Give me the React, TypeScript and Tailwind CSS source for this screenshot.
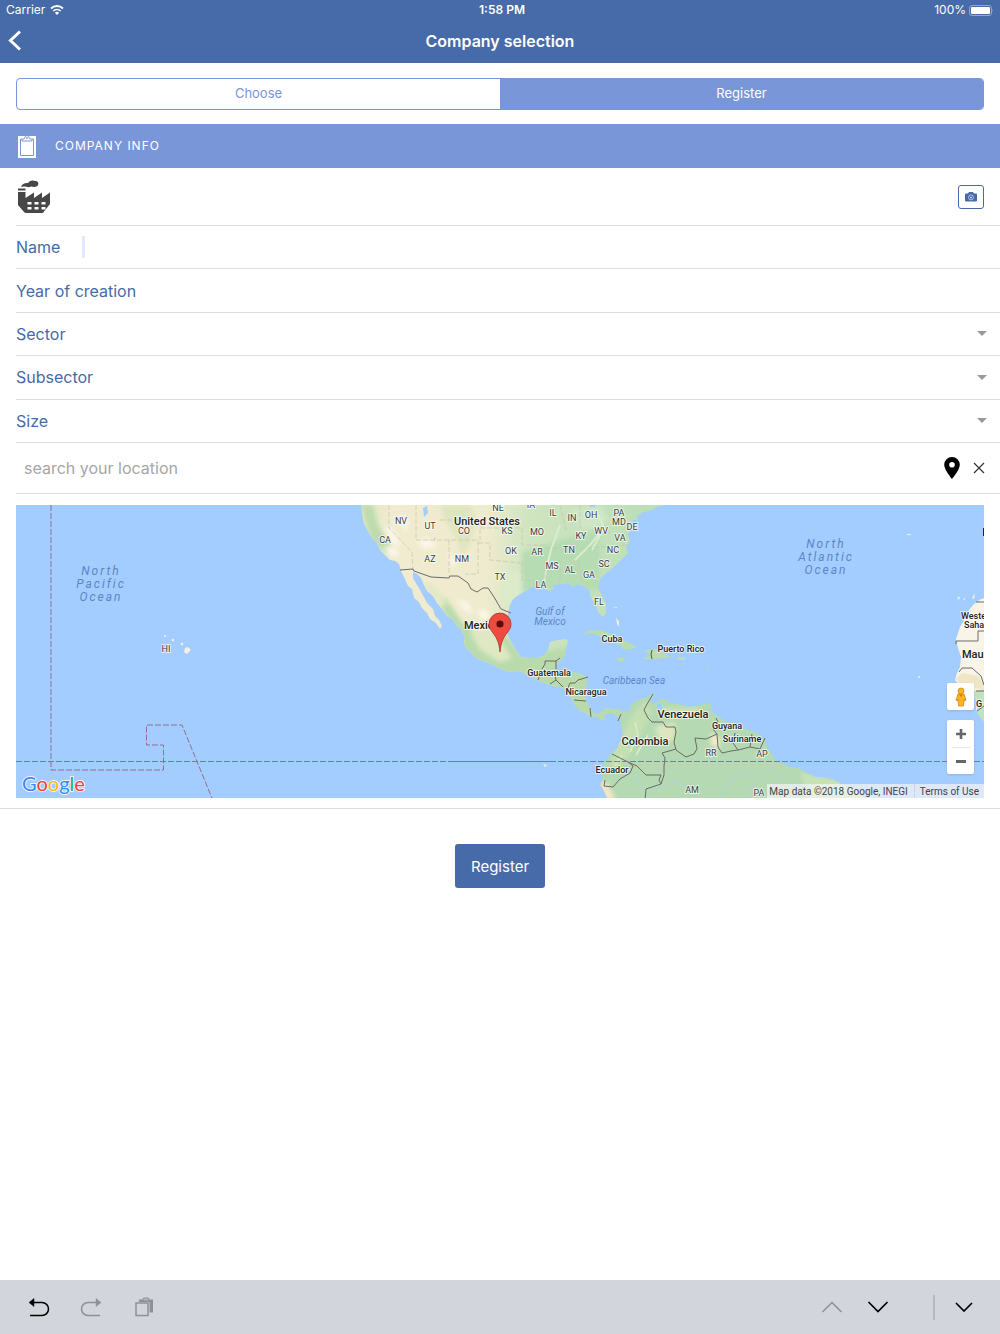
import type { ReactNode } from 'react'

interface MapLabelProps {
  x: number
  y: number
  size?: number
  weight?: number
  anchor?: 'start' | 'middle'
  children: ReactNode
}

/** Place name with the white halo used on the map tiles. */
function MapLabel({ x, y, size = 9, weight = 500, anchor = 'middle', children }: MapLabelProps) {
  return (
    <text
      x={x}
      y={y}
      fontSize={size}
      fontWeight={weight}
      textAnchor={anchor}
      fill={weight > 400 ? '#222' : '#3c3c3c'}
      stroke="#fff"
      strokeOpacity={0.7}
      strokeWidth={2}
      strokeLinejoin="round"
      paintOrder="stroke"
    >
      {children}
    </text>
  )
}

const STATES: [string, number, number][] = [
  ['NV', 401, 524],
  ['UT', 430, 529],
  ['CA', 385, 543],
  ['CO', 464, 534],
  ['NE', 498, 511],
  ['KS', 507, 534],
  ['IA', 531, 508],
  ['MO', 537, 535],
  ['IL', 553, 516],
  ['IN', 572, 521],
  ['OH', 591, 518],
  ['PA', 619, 516],
  ['MD', 619, 525],
  ['DE', 632, 530],
  ['WV', 601, 534],
  ['KY', 581, 539],
  ['VA', 620, 541],
  ['AZ', 430, 562],
  ['NM', 462, 562],
  ['OK', 511, 554],
  ['AR', 537, 555],
  ['TN', 569, 553],
  ['NC', 613, 553],
  ['SC', 604, 567],
  ['MS', 552, 569],
  ['AL', 570, 573],
  ['GA', 589, 578],
  ['TX', 500, 580],
  ['LA', 541, 588],
  ['FL', 599, 605],
  ['HI', 166, 652],
  ['RR', 711, 756],
  ['AP', 762, 757],
  ['AM', 692, 793],
  ['PA', 759, 796],
]

const COUNTRIES: [string, number, number, number][] = [
  ['United States', 487, 525, 11],
  ['Cuba', 612, 642, 9],
  ['Puerto Rico', 681, 652, 9],
  ['Guatemala', 549, 676, 9],
  ['Nicaragua', 586, 695, 9],
  ['Venezuela', 683, 718, 11],
  ['Colombia', 645, 745, 11],
  ['Guyana', 727, 729, 9],
  ['Suriname', 742, 742, 9],
  ['Ecuador', 612, 773, 9],
]

const OCEANS = [
  { x: 101, y: 575, lines: ['North', 'Pacific', 'Ocean'] },
  { x: 826, y: 548, lines: ['North', 'Atlantic', 'Ocean'] },
]

const NORTH_AMERICA =
  'M361 500 L362 514 364 524 368 531 372 538 377 543 380 550 386 556 390 560 395 561 399 564 401 571 405 579 408 586 412 589 414 598 419 602 422 608 427 613 430 619 436 623 440 629 442 626 439 620 435 616 433 609 427 603 424 597 420 590 417 585 413 578 413 572 417 574 421 578 424 585 427 591 433 596 437 603 443 610 447 616 453 619 456 625 461 629 465 637 464 643 467 649 473 654 478 659 486 662 493 665 501 669 510 672 517 671 522 672 529 676 537 680 545 683 550 685 563 688 568 693 572 699 575 705 580 711 586 713 590 717 596 716 602 721 605 718 604 714 609 713 613 713 618 717 623 722 625 716 619 709 612 709 606 708 600 713 594 713 588 705 585 698 586 688 587 678 582 674 577 673 568 671 560 672 556 670 558 662 564 657 566 648 568 641 566 639 557 640 550 642 548 650 543 656 536 658 530 658 521 657 517 652 513 645 509 638 507 632 505 623 508 614 510 605 513 599 520 594 527 590 532 587 537 587 544 588 550 591 554 588 552 585 559 584 567 583 573 586 578 584 583 586 589 589 591 598 596 605 598 612 603 617 606 613 606 604 602 596 598 587 600 579 606 573 613 568 620 561 628 553 626 547 630 541 628 534 631 530 630 524 634 519 638 522 637 516 643 512 650 511 657 507 664 505 664 500Z'

const SOUTH_AMERICA =
  'M620 718 L624 711 628 712 631 705 636 701 643 698 648 697 653 693 655 695 650 699 653 704 657 702 661 699 665 699 670 703 679 704 690 707 699 705 708 703 712 706 711 711 719 717 727 722 733 723 740 728 747 729 755 732 760 735 765 740 767 748 772 754 775 760 782 763 790 767 798 768 807 773 816 777 823 777 832 779 840 783 847 787 855 790 865 800 608 800 604 791 600 784 603 780 601 772 604 763 609 756 616 750 620 742 623 733 621 725Z'

const AFRICA =
  'M990 597 L981 599 974 604 969 610 965 619 960 627 956 639 958 648 961 657 960 667 957 673 955 680 960 686 966 690 974 696 977 703 976 709 979 715 985 722 990 722Z'

const BORDERS =
  'M400 570 L413 569 414 571 431 577 449 578 450 576 458 576 468 583 471 589 477 592 483 588 488 588 494 597 501 609 511 613 ' +
  'M542 669 L545 664 545 661 556 661 556 669 M556 661 L560 658 M538 680 L540 674 M550 684 L556 680 563 687 M556 680 L555 674 ' +
  'M568 688 L570 683 575 683 578 680 588 677 M574 700 L586 701 M590 708 L591 717 M621 714 L618 721 ' +
  'M653 694 L646 706 644 710 648 718 652 722 663 722 666 727 675 727 676 732 674 742 676 750 686 757 694 754 697 749 695 738 706 739 717 734 713 729 718 722 716 718 ' +
  'M676 749 L662 753 665 758 664 766 664 775 661 784 659 780 661 775 646 775 637 766 628 762 612 754 M628 762 L633 766 630 773 620 779 613 787 604 786 605 780 M661 784 L646 789 645 800 ' +
  'M717 734 L718 747 722 753 731 751 738 750 733 743 735 733 M738 750 L750 747 752 734 M750 747 L760 749 765 738 ' +
  'M984 602 L976 602 M984 631 L978 631 978 641 956 641 956 644 M959 672 L962 668 972 668 981 676 984 685 M976 691 L984 691 M977 711 L984 706'

function CompanyMap() {
  return (
    <svg
      viewBox="16 505 968 293"
      preserveAspectRatio="xMidYMid slice"
      className="block h-[293px] w-full bg-[#a3ccff] font-[Roboto,sans-serif]"
      role="img"
      aria-label="Map"
    >
      <defs>
        <linearGradient id="north" gradientUnits="userSpaceOnUse" x1="360" y1="0" x2="660" y2="0">
          <stop offset="0" stopColor="#d8e6bd" />
          <stop offset="0.1" stopColor="#f1ebcf" />
          <stop offset="0.42" stopColor="#efebcf" />
          <stop offset="0.56" stopColor="#cfe5c0" />
          <stop offset="1" stopColor="#b9deb6" />
        </linearGradient>
        <clipPath id="northClip">
          <path d={NORTH_AMERICA} />
        </clipPath>
        <clipPath id="southClip">
          <path d={SOUTH_AMERICA} />
        </clipPath>
        <filter id="soft">
          <feGaussianBlur stdDeviation="2" />
        </filter>
      </defs>

      <path d={NORTH_AMERICA} fill="url(#north)" />
      <g clipPath="url(#northClip)">
        <g filter="url(#soft)">
          <path d="M361 505 L373 505 378 525 390 545 388 555 372 542Z" fill="#bedcae" />
          <path d="M440 505 L470 505 476 520 470 545 462 556 455 535 445 522Z" fill="#dfe6bf" />
          <path d="M500 575 L522 570 524 592 508 606 502 596Z" fill="#dcebc9" />
          <path d="M522 552 L560 540 600 530 600 590 522 592Z" fill="#b6dcb3" />
          <path d="M437 598 L446 598 462 622 478 634 500 630 510 640 522 656 600 640 640 730 560 715 470 665Z" fill="#b9dbac" />
          <path d="M470 632 L490 628 500 640 512 658 500 662 480 650Z" fill="#dfe8c3" />
          <path d="M420 582 L432 584 448 604 440 606Z" fill="#e2e8c5" />
          <path d="M570 510 L600 506 610 520 585 530Z" fill="#cfe7c6" />
        </g>
        <g fill="#fbf7ea" filter="url(#soft)">
          <path d="M384 526 L394 530 401 547 392 543Z" />
          <path d="M400 513 L409 521 405 533Z" />
          <path d="M416 540 L428 539 438 546 424 549Z" />
          <path d="M383 546 L395 548 400 556 389 555Z" />
          <path d="M448 554 L457 560 452 569Z" />
          <path d="M457 599 L468 603 473 613 464 610Z" />
          <path d="M477 611 L486 610 490 617 482 620Z" />
        </g>
        <path
          d="M597 512 L604 528 590 545 575 560 M603 530 L592 550 M560 525 L551 550 546 570 544 584"
          fill="none"
          stroke="#d9ecd2"
          strokeWidth="2"
        />
        <path
          d="M389 505 V528 L412 552 M416 505 V540 H478 M449 540 V576 M478 541 V574 H465 M478 543 H490 V560 L520 563 M440 520 H480 V540 M480 528 H522 V545 H545 M412 552 L413 569 M522 562 V580 H535 M545 560 V585 M560 560 V583 M578 562 L582 580 M545 548 H590 L628 545 M560 505 L566 530 M580 505 V528"
          fill="none"
          stroke="#c9c3ae"
          strokeWidth="0.7"
          strokeDasharray="5 2"
        />
        <path d="M423 508 L427 506 428 513 424 517Z M434 538 L436 537 434 541Z M587 500 H598 L595 507 590 507Z" fill="#a3ccff" />
      </g>

      <path d={SOUTH_AMERICA} fill="#b5d9b2" />
      <g clipPath="url(#southClip)">
        <g filter="url(#soft)">
          <path d="M612 752 L622 735 632 715 646 700 652 712 640 735 628 756 612 775Z" fill="#c5e0b3" />
          <path d="M655 727 L676 722 674 740 660 744Z" fill="#dde6bf" />
          <path d="M710 733 L720 737 719 749 711 745Z" fill="#f3ebc9" />
          <path d="M600 780 L608 784 616 800 600 800Z" fill="#f1e7c8" />
          <path d="M800 772 L845 782 870 800 810 800Z" fill="#c8e2b8" />
          <path d="M660 708 L700 708 700 716 662 714Z" fill="#c9e2b6" />
        </g>
        <path
          d="M650 792 L672 782 690 786 M700 772 L712 762 M720 797 L735 776 752 772 M745 798 L760 778 775 766 M770 796 L782 776 M630 772 L645 790 M795 798 L800 780"
          fill="none"
          stroke="#a9d3e0"
          strokeWidth="0.8"
        />
        <path
          d="M630 752 L638 735 635 722 M636 755 L648 735 M615 765 L622 755"
          fill="none"
          stroke="#dcebc9"
          strokeWidth="1.5"
        />
        <path d="M657 704 L661 703 662 710 658 712Z" fill="#a3ccff" />
      </g>

      {/* Caribbean islands */}
      <g fill="#b9dcb0">
        <path d="M582 635 L588 631 597 630 606 632 614 636 622 640 630 643 637 647 631 649 622 649 620 645 610 641 601 637 592 633Z" />
        <path d="M645 650 L652 649 660 650 666 654 671 657 664 658 657 659 651 660 643 658 650 656Z" />
        <path d="M616 658 L622 658 627 660 620 661Z M678 657 L685 657 685 660 678 660Z" />
        <path d="M706 668 L709 670 707 671Z M710 678 L712 679 710 680Z" />
      </g>
      <path d="M616 618 L619 621 619 627 617 624Z M612 607 L617 607 617 608Z" fill="#e8f0e0" />
      <path d="M652 650 L651 654 652 659" fill="none" stroke="#555" />
      <g fill="#f4f1e4">
        <path d="M185 648 L188 647 191 650 187 654 184 652Z" />
        <circle cx="165" cy="636" r="1" />
        <circle cx="173" cy="640" r="1.2" />
        <circle cx="182" cy="644" r="1.3" />
        <path d="M957 597 l3 0 -1 3Z M963 599 l2 -1 0 2Z M972 598 l3 -5 -1 6Z" />
        <path d="M907 534 l4 0 0 1 -4 0Z M543 764 l4 1 -2 2Z" />
        <circle cx="919" cy="677" r="1" />
      </g>

      <path d={AFRICA} fill="#f8f4e7" />
      <path d="M956 679 L962 673 978 676 984 684 984 690 962 686Z" fill="#efe6c6" />
      <path d="M970 691 L984 690 984 722 977 712 977 701Z" fill="#c4e2b9" />

      <path d={BORDERS} fill="none" stroke="#6b6b66" strokeWidth="1" strokeLinejoin="round" />

      {/* Date line and equator */}
      <g fill="none" stroke="#956f8d" strokeWidth="1">
        <path d="M51 505 V770 H163.5 V745 H146.5 V725 H182 L212 798" strokeDasharray="6 2" />
        <path d="M16 761.5 H450" strokeDasharray="6 2" />
        <path d="M450 761.5 H550" />
        <path d="M550 761.5 H984" strokeDasharray="6 2" />
      </g>

      {STATES.map(([name, x, y]) => (
        <MapLabel key={`${name}-${x}`} x={x} y={y} weight={400}>
          {name}
        </MapLabel>
      ))}
      {COUNTRIES.map(([name, x, y, size]) => (
        <MapLabel key={name} x={x} y={y} size={size}>
          {name}
        </MapLabel>
      ))}
      <MapLabel x={464} y={629} size={11} anchor="start">Mexico</MapLabel>
      <MapLabel x={961} y={619} anchor="start">Weste</MapLabel>
      <MapLabel x={964} y={628} anchor="start">Saha</MapLabel>
      <MapLabel x={962} y={658} size={11} anchor="start">Mau</MapLabel>
      <MapLabel x={976} y={707} anchor="start">G</MapLabel>
      <path d="M983.5 528 V536" stroke="#222" />

      <g fill="#5b87c7" fontStyle="italic" textAnchor="middle">
        {OCEANS.map((ocean) => (
          <text key={ocean.x} y={ocean.y} fontSize={12} letterSpacing={2}>
            {ocean.lines.map((line, i) => (
              <tspan key={line} x={ocean.x} dy={i === 0 ? 0 : 13}>
                {line}
              </tspan>
            ))}
          </text>
        ))}
        <text fontSize={10}>
          <tspan x={550} y={615}>Gulf of</tspan>
          <tspan x={550} y={625}>Mexico</tspan>
        </text>
        <text x={634} y={684} fontSize={10}>Caribbean Sea</text>
      </g>

      {/* Marker */}
      <path
        d="M500 652 C499 641 496 637 493 633 C490 629 489 627 489 624 A11 11 0 0 1 511 624 C511 627 510 629 507 633 C504 637 501 641 500 652Z"
        fill="#ee4b40"
        stroke="#b0302a"
        strokeWidth="0.8"
      />
      <circle cx="500" cy="624" r="3.6" fill="#5a0f0c" />
    </svg>
  )
}

function GoogleLogo() {
  return (
    <svg width="66" height="26" viewBox="0 0 66 26" className="font-[Lato,sans-serif]" aria-label="Google">
      <text x="1" y="19" fontSize="20" fontWeight="400" strokeOpacity="0.8" stroke="#fff" strokeWidth="2" paintOrder="stroke">
        <tspan fill="#4285f4">G</tspan>
        <tspan fill="#ea4335">o</tspan>
        <tspan fill="#fbbc05">o</tspan>
        <tspan fill="#4285f4">g</tspan>
        <tspan fill="#34a853">l</tspan>
        <tspan fill="#ea4335">e</tspan>
      </text>
    </svg>
  )
}

function FactoryIcon() {
  return (
    <svg width="34" height="34" viewBox="0 0 34 34" fill="#474747" aria-hidden="true">
      <path d="M3 7 C4 4 7 2.5 10 3 C12 0 15 0 17 1 C20 1 21 3 20 5 C19 7.5 15 7 13 6.5 C11 8 8 6.5 6 6.5 C5 6.5 4 7 3 7Z" />
      <path d="M0 8.5 H7.5 V10.5 H0Z" />
      <path d="M0 12 H7.5 V18 L16 12.5 V18 L24 12.5 V18 L32 12.5 V24 L26 31.5 Q25.5 33 24 33 H8 Q7 33 6 32 L0 25Z" />
      <path
        d="M9.5 22 h4 v2.5 h-4Z M16.5 22 h4 v2.5 h-4Z M23.5 22 h4 v2.5 h-4Z M9.5 27 h4 v2.5 h-4Z M16.5 27 h4 v2.5 h-4Z M23.5 27 h4 v2.5 h-4Z"
        fill="#fff"
      />
    </svg>
  )
}

function SelectRow({ id, label }: { id: string; label: string }) {
  return (
    <div className="flex items-center border-b border-[#dedede] pr-[13px]">
      <label htmlFor={id}>{label}</label>
      <select id={id} className="h-8 min-w-0 flex-1 appearance-none bg-transparent outline-none" defaultValue="">
        <option value="" />
      </select>
      <svg width="10" height="5" viewBox="0 0 10 5" aria-hidden="true">
        <path d="M0 0 H10 L5 5Z" fill="#999" />
      </svg>
    </div>
  )
}

function StatusBar() {
  return (
    <div className="grid h-5 grid-cols-3 items-center px-[6px] text-[12px]">
      <div className="flex items-center gap-[5px]">
        <span>Carrier</span>
        <svg width="14" height="10" viewBox="0 0 14 10" aria-hidden="true">
          <path d="M1 3.5 A8.6 8.6 0 0 1 13 3.5" fill="none" stroke="#fff" strokeWidth="1.9" />
          <path d="M3.3 6 A5.3 5.3 0 0 1 10.7 6" fill="none" stroke="#fff" strokeWidth="1.7" />
          <path d="M7 10 L4.9 7.8 A3 3 0 0 1 9.1 7.8Z" fill="#fff" />
        </svg>
      </div>
      <span className="pl-1 text-center font-semibold">1:58 PM</span>
      <div className="flex items-center justify-end gap-[3px]">
        <span>100%</span>
        <svg width="25" height="11" viewBox="0 0 25 11" aria-hidden="true">
          <rect x="0.5" y="0.5" width="22" height="10" rx="2.5" fill="none" stroke="#93a8d0" />
          <rect x="2" y="2" width="19" height="7" rx="1" fill="#fff" />
          <path d="M23.5 4 Q25 5.5 23.5 7Z" fill="#93a8d0" />
        </svg>
      </div>
    </div>
  )
}

function KeyboardBar() {
  return (
    <footer className="mt-auto flex h-[54px] items-center bg-[#d2d5dc] pr-[27px] pl-7 text-black">
      <button type="button" aria-label="Undo">
        <svg width="22" height="20" viewBox="0 0 22 20" fill="none" stroke="currentColor" strokeWidth="1.5">
          <path d="M5 5.5 H14 A6.5 6.5 0 0 1 14 18.5 H2" />
          <path d="M1 5.5 L6 1.5 V9.5Z" fill="currentColor" strokeWidth="0.5" />
        </svg>
      </button>
      <button type="button" aria-label="Redo" className="ml-[30px] text-[#8f9195]">
        <svg width="22" height="20" viewBox="0 0 22 20" fill="none" stroke="currentColor" strokeWidth="1.5">
          <path d="M17 5.5 H8 A6.5 6.5 0 0 0 8 18.5 H20" />
          <path d="M21 5.5 L16 1.5 V9.5Z" fill="currentColor" strokeWidth="0.5" />
        </svg>
      </button>
      <button type="button" aria-label="Paste" className="ml-[33px] text-[#8f9195]">
        <svg width="19" height="20" viewBox="0 0 19 20" fill="none" stroke="currentColor">
          <path d="M4 2.5 H18 V15.5 H14.5 V5 H4Z" fill="currentColor" stroke="none" />
          <rect x="8" y="1" width="6" height="3" rx="1" fill="#b4b6bb" />
          <rect x="1" y="6" width="12" height="12.5" strokeWidth="1.5" />
        </svg>
      </button>
      <button type="button" aria-label="Previous field" className="ml-auto text-[#8f9195]">
        <svg width="22" height="12" viewBox="0 0 22 12" fill="none" stroke="currentColor" strokeWidth="1.5">
          <path d="M1.5 11 L11 1.5 20.5 11" />
        </svg>
      </button>
      <button type="button" aria-label="Next field" className="ml-6">
        <svg width="22" height="12" viewBox="0 0 22 12" fill="none" stroke="currentColor" strokeWidth="1.7">
          <path d="M1.5 1 L11 10.5 20.5 1" />
        </svg>
      </button>
      <span className="ml-11 h-[25px] w-[2px] bg-[#b8babf]" />
      <button type="button" aria-label="Hide keyboard" className="ml-5">
        <svg width="18" height="10" viewBox="0 0 18 10" fill="none" stroke="currentColor" strokeWidth="1.7">
          <path d="M1 1 L9 9 17 1" />
        </svg>
      </button>
    </footer>
  )
}

export default function App() {
  return (
    <div className="flex min-h-screen flex-col bg-white font-[Inter,sans-serif]">
      <header className="bg-[#476aa8] text-white">
        <StatusBar />
        <div className="grid h-[43px] grid-cols-[32px_1fr_32px] items-center pb-[2px]">
          <button type="button" aria-label="Back" className="pl-2">
            <svg width="13" height="21" viewBox="0 0 13 21" fill="none" stroke="currentColor" strokeWidth="3">
              <path d="M12 1.5 L2.5 10.5 12 19.5" />
            </svg>
          </button>
          <h1 className="text-center text-[16px] font-semibold">Company selection</h1>
        </div>
      </header>

      <div className="mx-4 mt-[15px] flex h-8 overflow-hidden rounded-[4px] border border-[#7996d8] text-[13px]">
        <button type="button" className="flex-1 text-[#7996d8]">Choose</button>
        <button type="button" className="flex-1 bg-[#7996d8] text-white">Register</button>
      </div>

      <div className="mt-[14px] flex h-11 items-center gap-[18px] bg-[#7996d8] pl-[18px] text-white">
        <svg width="19" height="23" viewBox="0 0 19 23" aria-hidden="true">
          <path d="M0 1 H18 V23 H0Z" fill="#fff" />
          <path d="M4 4 H2.5 V20.5 H15.5 V4 H14" fill="none" stroke="#7996d8" />
          <path d="M4 6 V4.5 L6.5 3.5 Q7 0.5 9 0.5 Q11 0.5 11.5 3.5 L14 4.5 V6Z" fill="#fff" stroke="#7996d8" />
          <circle cx="9" cy="3" r="0.9" fill="#7996d8" />
        </svg>
        <h2 className="text-[12px] tracking-[1px]">COMPANY INFO</h2>
      </div>

      <form className="text-[16px] text-[#476aa8]" onSubmit={(e) => e.preventDefault()}>
        <div className="ml-4 flex h-[58px] items-center justify-between border-b border-[#dedede] pr-4 pl-[2px]">
          <FactoryIcon />
          <button
            type="button"
            aria-label="Take photo"
            className="flex h-6 w-[26px] items-center justify-center rounded-[3px] border border-[#476aa8]"
          >
            <svg width="12" height="10" viewBox="0 0 12 10" aria-hidden="true">
              <path d="M1 1.5 H3 L4 0 H8 L9 1.5 H11 Q12 1.5 12 2.5 V8.5 Q12 9.5 11 9.5 H1 Q0 9.5 0 8.5 V2.5 Q0 1.5 1 1.5Z" fill="#476aa8" />
              <circle cx="6" cy="5.4" r="2.5" fill="none" stroke="#c5d1e8" strokeWidth="0.8" />
              <circle cx="6" cy="5.4" r="1" fill="#c5d1e8" />
            </svg>
          </button>
        </div>

        <div className="ml-4 grid min-h-[217px] grid-rows-5">
          <div className="flex items-center border-b border-[#dedede]">
            <label htmlFor="name">Name</label>
            <span className="ml-[22px] h-[22px] w-[3px] bg-[#e2e9fb]" />
            <input id="name" type="text" className="h-8 min-w-0 flex-1 outline-none" />
          </div>
          <div className="flex items-center border-b border-[#dedede]">
            <label htmlFor="year">Year of creation</label>
            <input id="year" type="text" className="h-8 min-w-0 flex-1 outline-none" />
          </div>
          <SelectRow id="sector" label="Sector" />
          <SelectRow id="subsector" label="Subsector" />
          <SelectRow id="size" label="Size" />
        </div>

        <div className="ml-4 flex h-[51px] items-center border-b border-[#dedede] pr-[15px] pl-2">
          <input
            type="text"
            aria-label="Location"
            placeholder="search your location"
            className="h-8 min-w-0 flex-1 outline-none placeholder:text-[#a6a6a6]"
          />
          <button type="button" aria-label="Use my position">
            <svg width="16" height="22" viewBox="0 0 16 22" aria-hidden="true">
              <path
                d="M8 0 A7.8 7.8 0 0 1 15.8 7.8 C15.8 13 8 22 8 22 C8 22 0.2 13 0.2 7.8 A7.8 7.8 0 0 1 8 0Z M8 5 A2.8 2.8 0 1 0 8 10.6 A2.8 2.8 0 1 0 8 5Z"
                fill="#000"
                fillRule="evenodd"
              />
            </svg>
          </button>
          <button type="button" aria-label="Clear location" className="ml-[13px]">
            <svg width="12" height="12" viewBox="0 0 12 12" fill="none" stroke="#333" strokeWidth="1.2" aria-hidden="true">
              <path d="M1 1 L11 11 M11 1 L1 11" />
            </svg>
          </button>
        </div>

        <div className="border-b border-[#dedede] px-4 pt-[11px] pb-[10px]">
          <div className="relative overflow-hidden">
            <CompanyMap />
            <div className="absolute bottom-0 left-[5px]">
              <GoogleLogo />
            </div>
            <div className="absolute right-[10px] bottom-6 flex w-[27px] flex-col gap-[10px]">
              <button
                type="button"
                aria-label="Street view"
                className="flex h-[27px] items-center justify-center rounded-[2px] bg-white shadow"
              >
                <svg width="12" height="20" viewBox="0 0 12 20" aria-hidden="true">
                  <path d="M3 7 H9 L11 13 9.5 14 9 12 8.5 19 H3.5 L3 12 2.5 14 1 13Z" fill="#fbb41c" stroke="#c98212" strokeWidth="0.7" />
                  <circle cx="6" cy="4" r="3" fill="#fbb41c" stroke="#c98212" strokeWidth="0.7" />
                  <path d="M4 7.5 L6 10 8 7.5Z" fill="#e2701a" />
                </svg>
              </button>
              <div className="flex flex-col items-center rounded-[2px] bg-white text-[#666] shadow">
                <button type="button" aria-label="Zoom in" className="flex h-[27px] w-full items-center justify-center">
                  <svg width="10" height="10" viewBox="0 0 10 10" fill="currentColor" aria-hidden="true">
                    <path d="M3.7 0 H6.3 V3.7 H10 V6.3 H6.3 V10 H3.7 V6.3 H0 V3.7 H3.7Z" />
                  </svg>
                </button>
                <span className="h-px w-[18px] bg-[#e6e6e6]" />
                <button type="button" aria-label="Zoom out" className="flex h-[26px] w-full items-center justify-center">
                  <svg width="10" height="3" viewBox="0 0 10 3" fill="currentColor" aria-hidden="true">
                    <path d="M0 0 H10 V3 H0Z" />
                  </svg>
                </button>
              </div>
            </div>
            <div className="absolute right-0 bottom-0 flex h-[14px] items-center bg-[#f5f5f5]/70 font-[Roboto,sans-serif] text-[10px] text-[#444]">
              <span className="pr-[6px] pl-[2px]">Map data ©2018 Google, INEGI</span>
              <a href="#terms" className="border-l border-[#c9d6ea] px-[5px]">Terms of Use</a>
            </div>
          </div>
        </div>

        <div className="mt-[35px] flex justify-center">
          <button type="submit" className="h-11 rounded-[3px] bg-[#476aa8] px-4 pt-[2px] text-[15px] text-white">
            Register
          </button>
        </div>
      </form>

      <KeyboardBar />
    </div>
  )
}
